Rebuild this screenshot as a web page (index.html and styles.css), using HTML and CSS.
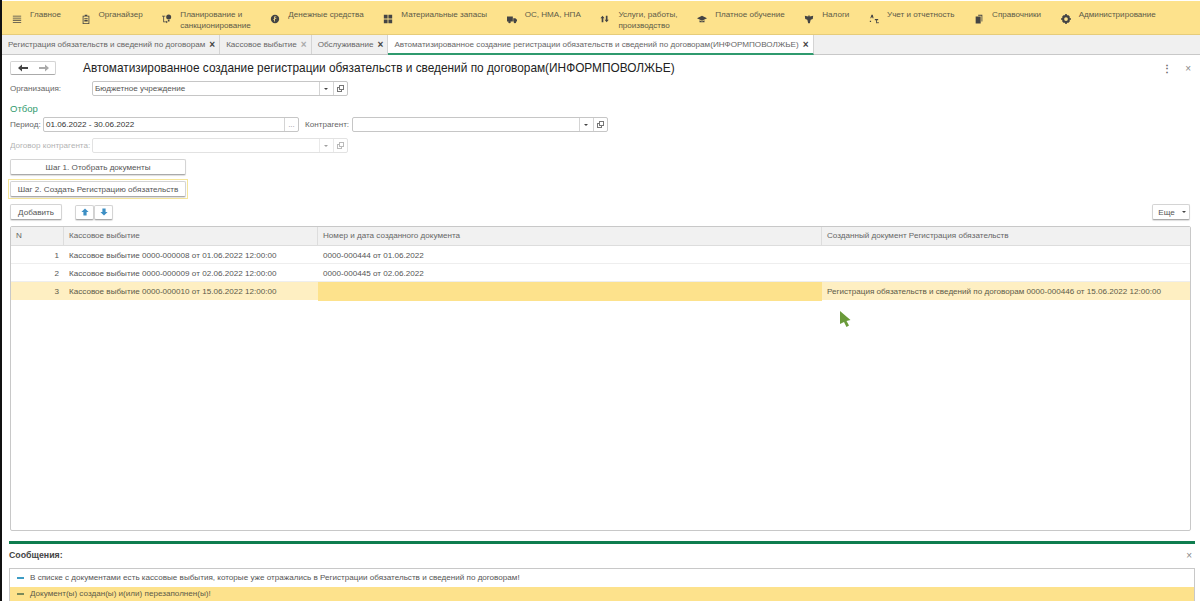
FILE: index.html
```html
<!DOCTYPE html>
<html>
<head>
    <meta charset="utf-8">
    <title>Автоматизированное создание регистрации обязательств</title>
    <link rel="stylesheet" href="styles.css">
</head>

<body>
    <div class="menu">
        <div class="mi"><svg viewBox="0 0 12 12"><path d="M1 2h10v1H1zM1 4.500h10v1H1zM1 7h10v1H1zM1 9.500h10v1H1z"/></svg><span>Главное</span></div>
        <div class="mi"><svg viewBox="0 0 12 12"><path d="M2 2h2.500V1h3v1H10v10H2zM3 3v8h6V3zM4 5h4v1H4zM4 7h4v2H4z" fill-rule="evenodd"/></svg><span>Органайзер</span></div>
        <div class="mi"><svg viewBox="0 0 12 12"><path d="M0 2h4v1H2.500v6H5V8l2 1.500L5 11v-1H1.500V3H0z"/><circle cx="8" cy="3.500" r="3"/><path d="M7 7h2v2H7z"/></svg><span>Планирование и<br>санкционирование</span></div>
        <div class="mi"><svg viewBox="0 0 12 12"><circle cx="6" cy="6" r="5"/><path d="M5 3h2.500v1H6v1h1.500v1H6v3H5V7H4V6h1z" fill="#fde28c"/></svg><span>Денежные средства</span></div>
        <div class="mi"><svg viewBox="0 0 12 12"><path d="M1 1h4.500v4.500H1zM6.500 1H11v4.500H6.500zM1 6.500h4.500V11H1zM6.500 6.500H11V11H6.500z"/></svg><span>Материальные запасы</span></div>
        <div class="mi"><svg viewBox="0 0 12 12"><path d="M0 3h7v6H0zM7.500 5H10l2 2v2H7.500z"/><circle cx="3" cy="9.500" r="1.500"/><circle cx="9.500" cy="9.500" r="1.500"/></svg><span>ОС, НМА, НПА</span></div>
        <div class="mi"><svg viewBox="0 0 12 12"><path d="M3 2l2.500 3H4v5H2V5H.5zM7 2h2v5h1.500L8 10 5.500 7H7z"/></svg><span>Услуги, работы,<br>производство</span></div>
        <div class="mi"><svg viewBox="0 0 12 12"><path d="M6 2l6 3-6 3-6-3zM3 7.500l3 1.500 3-1.500V10H3z"/></svg><span>Платное обучение</span></div>
        <div class="mi"><svg viewBox="0 0 12 12"><path d="M6 1l1 2 4-1-.5 4L8 7l-1 4H5L4 7 1.500 6 1 2l4 1z"/></svg><span>Налоги</span></div>
        <div class="mi"><svg viewBox="0 0 12 12"><path d="M3 1h1.500l1 4H4.300L4 4H3l-.5 1H1.500zM7 6h4v1.500H9.500V11H8.500V7.500H7zM1 8h1.500v1.500H1zM10 9.500h1.500V11H10z"/></svg><span>Учет и отчетность</span></div>
        <div class="mi"><svg viewBox="0 0 12 12"><path d="M5 1h5v8H9V2H5zM2 3h6v8.500H2z"/></svg><span>Справочники</span></div>
        <div class="mi"><svg viewBox="0 0 12 12"><circle cx="6" cy="6" r="3.500" fill="none" stroke="#444" stroke-width="2.500"/><path d="M5 0h2v2H5zM5 10h2v2H5zM0 5h2v2H0zM10 5h2v2h-2zM1.500 3L3 1.500 4 2.500 2.500 4zM9 1.500L10.500 3 9.500 4 8 2.500zM1.500 9L3 10.500 4 9.500 2.500 8zM9 10.500L10.500 9 9.500 8 8 9.500z"/></svg><span>Администрирование</span></div>
    </div>

    <div class="tabs">
        <div class="tab">Регистрация обязательств и сведений по договорам<i>×</i></div>
        <div class="tab">Кассовое выбытие<i class="dim">×</i></div>
        <div class="tab">Обслуживание<i>×</i></div>
        <div class="tab on">Автоматизированное создание регистрации обязательств и сведений по договорам(ИНФОРМПОВОЛЖЬЕ)<i>×</i></div>
    </div>

    <div class="page">
        <div class="head">
            <div class="nav">
                <svg class="back" viewBox="0 0 10 8"><path d="M0 4l4-3.500V3h6v2H4v2.500z"/></svg>
                <svg class="fwd" viewBox="0 0 10 8"><path d="M10 4L6 .5V3H0v2h6v2.500z"/></svg>
            </div>
            <h1>Автоматизированное создание регистрации обязательств и сведений по договорам(ИНФОРМПОВОЛЖЬЕ)</h1>
            <div class="tools"><span class="dots">⋮</span><span class="x">×</span></div>
        </div>

        <div class="row org">
            <label class="lb-wide">Организация:</label>
            <div class="fld"><span class="val">Бюджетное учреждение</span><b class="dd"></b><b class="op"></b></div>
        </div>

        <div class="sect">Отбор</div>

        <div class="row per">
            <label class="lb-per">Период:</label>
            <div class="fld"><span class="val dark">01.06.2022 - 30.06.2022</span><b class="more">...</b></div>
            <label class="lb-agent">Контрагент:</label>
            <div class="fld"><span class="val"></span><b class="dd"></b><b class="op"></b></div>
        </div>

        <div class="row off">
            <label class="lb-wide">Договор контрагента:</label>
            <div class="fld"><span class="val"></span><b class="dd"></b><b class="op"></b></div>
        </div>

        <button class="btn step">Шаг 1. Отобрать документы</button>
        <div class="focus"><button class="btn step">Шаг 2. Создать Регистрацию обязательств</button></div>

        <div class="bar">
            <button class="btn add">Добавить</button>
            <div class="arrows">
                <button class="btn"><svg viewBox="0 0 10 10"><path d="M5 .5L9.500 5H7v4.500H3V5H.5z"/></svg></button>
                <button class="btn"><svg viewBox="0 0 10 10"><path d="M5 9.500L.5 5H3V.5h4V5h2.500z"/></svg></button>
            </div>
            <button class="btn more-btn">Еще<b class="dd"></b></button>
        </div>

        <div class="tbl">
            <div class="tr th"><div>N</div><div>Кассовое выбытие</div><div>Номер и дата созданного документа</div><div>Созданный документ Регистрация обязательств</div></div>
            <div class="tr"><div class="n">1</div><div>Кассовое выбытие 0000-000008 от 01.06.2022 12:00:00</div><div>0000-000444 от 01.06.2022</div><div></div></div>
            <div class="tr"><div class="n">2</div><div>Кассовое выбытие 0000-000009 от 02.06.2022 12:00:00</div><div>0000-000445 от 02.06.2022</div><div></div></div>
            <div class="tr cur"><div class="n">3</div><div>Кассовое выбытие 0000-000010 от 15.06.2022 12:00:00</div><div class="cell"></div><div>Регистрация обязательств и сведений по договорам 0000-000446 от 15.06.2022 12:00:00</div></div>
        </div>

        <div class="msgs">
            <div class="msgs-head"><b>Сообщения:</b><span class="x">×</span></div>
            <div class="msg-list">
                <div class="msg"><i></i>В списке с документами есть кассовые выбытия, которые уже отражались в Регистрации обязательств и сведений по договорам!</div>
                <div class="msg cur"><i></i>Документ(ы) создан(ы) и(или) перезаполнен(ы)!</div>
            </div>
        </div>
    </div>

    <svg class="cursor" viewBox="0 0 11 16"><path d="M0 0l10.500 9-4 1 2.500 4.500-2.500 1.500-2.500-5L0 13z"/></svg>
</body>

</html>
```

FILE: styles.css
```css
html { background: #111; }

body {
    margin: 0;
    margin-left: 2px;
    width: 1198px;
    height: 601px;
    overflow: hidden;
    position: relative;
    display: flex;
    flex-direction: column;
    background: #fff;
    font-family: "Liberation Sans", sans-serif;
    font-size: 8.1px;
    color: #555;
}

.menu {
    height: 33px;
    margin-top: 1px;
    flex: none;
    display: flex;
    gap: 19.600px;
    padding-left: 10px;
    background: #fde28c;
    border-bottom: 1px solid #e6cc7a;
}
.mi {
    display: flex;
    gap: 8px;
    padding-top: 8px;
    line-height: 11px;
    color: #5c5a48;
    white-space: nowrap;
}
.mi svg {
    width: 10px;
    height: 10px;
    margin-top: 5px;
    fill: #444;
    flex: none;
}

.tabs {
    height: 19px;
    flex: none;
    display: flex;
    background: #f0f0f0;
    border-bottom: 1px solid #c8c8c8;
}
.tab {
    padding: 0 4px 0 6px;
    display: flex;
    align-items: center;
    border-right: 1px solid #d4d4d4;
    white-space: nowrap;
    color: #666;
}
.tab i {
    font-style: normal;
    font-weight: bold;
    font-size: 10px;
    margin-left: 4px;
    color: #444;
}
.tab i.dim { color: #aaa; }
.tab.on {
    background: #fff;
    border-bottom: 2px solid #2f9a6e;
    height: 18px;
}

.page {
    flex: 1;
    min-height: 0;
    display: flex;
    flex-direction: column;
    padding: 0 5px 0 8px;
}

.head {
    height: 26px;
    flex: none;
    display: flex;
    align-items: center;
}
.nav {
    width: 46px;
    height: 14px;
    box-sizing: border-box;
    display: flex;
    align-items: center;
    border: 1px solid #d4d4d4;
    border-bottom-color: #aaa;
    border-radius: 2px;
}
.nav svg { width: 10px; height: 8px; margin-left: 7px; }
.nav .fwd { margin-left: 11px; }
.back { fill: #444; }
.fwd { fill: #aaa; }
h1 {
    margin: 0 0 0 27px;
    font-size: 11.850px;
    font-weight: normal;
    color: #222;
    white-space: nowrap;
}
.tools {
    margin-left: auto;
    display: flex;
    gap: 13px;
    padding-right: 4px;
    color: #666;
    font-size: 10px;
    align-items: center;
}
.dots { font-weight: bold; }
.x { color: #888; font-size: 10px; }

.row {
    display: flex;
    align-items: center;
    flex: none;
}
label { color: #666; white-space: nowrap; }
.org { height: 15px; }
.lb-wide { width: 82px; }
.lb-per { width: 33px; }
.lb-agent { width: 47px; margin-left: 6px; }
.fld {
    width: 256px;
    height: 15px;
    box-sizing: border-box;
    display: flex;
    border: 1px solid #c6c6c6;
    border-radius: 2px;
    background: #fff;
}
.val {
    flex: 1;
    line-height: 13px;
    padding-left: 2px;
    color: #555;
    white-space: nowrap;
}
.val.dark { color: #333; }
.fld b {
    flex: none;
    width: 13px;
    border-left: 1px solid #d4d4d4;
    position: relative;
    font-weight: normal;
}
.dd::after {
    content: "";
    position: absolute;
    left: 4px;
    top: 6px;
    border: 2px solid transparent;
    border-top: 2px solid #444;
}
.op::before, .op::after {
    content: "";
    position: absolute;
    width: 3px;
    height: 3px;
    border: 1px solid #777;
}
.op::before { left: 3px; top: 5px; }
.op::after { left: 5px; top: 3px; background: #fff; }

.sect {
    margin-top: 6px;
    height: 13px;
    font-size: 9.500px;
    line-height: 13px;
    color: #2f9a6e;
    flex: none;
}

.per { height: 15px; margin-top: 2px; }
.fld .more {
    text-align: center;
    color: #999;
    line-height: 13px;
}

.off { height: 15px; margin-top: 6px; opacity: .5; }

.btn {
    font: inherit;
    color: #555;
    background: #fff;
    border: 1px solid #d4d4d4;
    border-bottom: 1px solid #aaa;
    border-radius: 2px;
    padding: 0;
    box-shadow: 0 1px 1px #0002;
    white-space: nowrap;
}
.step {
    display: block;
    width: 176px;
    height: 16px;
    margin-top: 6px;
    flex: none;
}
.focus {
    width: 180px;
    height: 20px;
    box-sizing: border-box;
    margin: 4px 0 0 -2px;
    padding: 1px;
    border: 1px solid #f5e59a;
    display: flex;
    flex: none;
}
.focus .step { margin: 0; }

.bar {
    display: flex;
    align-items: center;
    height: 16px;
    margin-top: 5px;
    flex: none;
}
.add { width: 52px; height: 16px; }
.arrows {
    display: flex;
    margin-left: 13px;
}
.arrows .btn {
    width: 19px;
    height: 15px;
    display: flex;
    align-items: center;
    justify-content: center;
}
.arrows svg { width: 8px; height: 8px; fill: #3d8fc4; }
.more-btn {
    margin-left: auto;
    margin-right: 5px;
    width: 38px;
    height: 16px;
    position: relative;
    padding-right: 9px;
}
.more-btn .dd::after { left: auto; right: 3px; top: 6px; }

.tbl {
    margin: 6px 4px 0 0;
    height: 305px;
    box-sizing: border-box;
    border: 1px solid #c8c8c8;
    border-radius: 2px;
    flex: none;
}
.tr {
    display: grid;
    grid-template-columns: 53px 254px 504px 1fr;
    height: 18px;
    align-items: stretch;
    border-bottom: 1px solid #eee;
    box-sizing: border-box;
}
.tr > div {
    padding: 0 5px;
    line-height: 19px;
    white-space: nowrap;
}
.th {
    height: 19px;
    background: #f1f1f1;
    border-bottom: 1px solid #ddd;
    color: #666;
}
.tr.th > div { border-right: 1px solid #ddd; line-height: 18px; }
.tr.th > div:last-child { border: 0; }
.n { text-align: right; }
.tr.cur {
    background: #feefc2;
    border: 0;
    color: #5c5a48;
}
.tr .cell { background: #fde28c; }

.msgs { margin: 10px 0 0 -1px; flex: none; }
.msgs-head {
    border-top: 3px solid #0f7d4f;
    height: 27px;
    padding: 0 3px 2px 0;
    box-sizing: border-box;
    display: flex;
    align-items: center;
    justify-content: space-between;
}
.msgs-head b { color: #444; font-size: 8.800px; }
.msg-list {
    border: 1px solid #c8c8c8;
    border-bottom: 0;
}
.msg {
    height: 18px;
    line-height: 18px;
    padding-left: 20px;
    position: relative;
    white-space: nowrap;
}
.msg i {
    position: absolute;
    left: 7px;
    top: 8px;
    width: 7px;
    height: 2px;
    background: #3d9cc4;
}
.msg.cur {
    height: 14px;
    line-height: 14px;
    background: #fde28c;
    color: #5c5a48;
    border-bottom: 1px solid #caa94e;
}
.msg.cur i { background: #7a8a5a; top: 6px; }

.cursor {
    position: absolute;
    left: 838px;
    top: 311px;
    width: 11px;
    height: 16px;
    fill: #6a9a3a;
}
```
